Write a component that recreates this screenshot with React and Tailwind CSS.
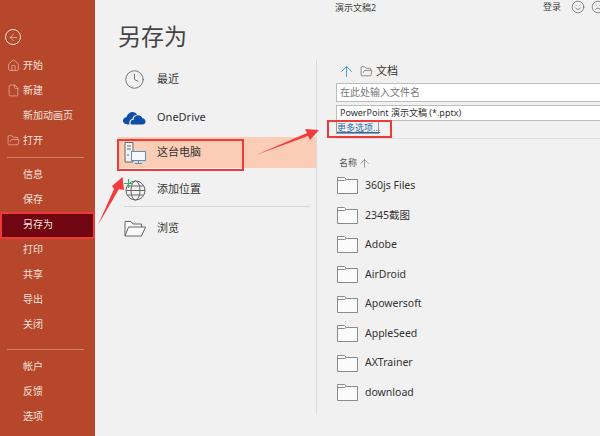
import { ArrowLeft, ArrowUp, Clock, File, FolderOpen, Home, Smile, Frown } from 'lucide-react';

function NavRow({ label, icon, active }) {
  return (
    <div className={`flex h-[25px] items-center pl-[23px] text-[10px] text-[#f6e3dd] ${active ? 'bg-[#6f0611]' : ''}`}>
      {icon && <span className="-ml-[17px] mr-[3px] flex w-[14px] justify-center">{icon}</span>}
      {label}
    </div>
  );
}

function FolderIcon() {
  return (
    <svg width="21" height="17" viewBox="0 0 21 17" fill="none" className="shrink-0">
      <path d="M0.5 16.5V0.5H7.5L9.5 2.5H20.5V16.5Z" fill="#fbfbfb" stroke="#8a8a8a" />
      <path d="M0.5 3.5H7.5L9.5 2.5" stroke="#8a8a8a" />
    </svg>
  );
}

function PlaceRow({ icon, label, selected }) {
  return (
    <div className={`flex h-[31px] items-center text-[11px] text-[#333] ${selected ? 'bg-[#fccdb6]' : ''}`}>
      <span className="flex w-[33px] justify-center">{icon}</span>
      <span className="ml-[6px]">{label}</span>
    </div>
  );
}

const files = ['360js Files', '2345截图', 'Adobe', 'AirDroid', 'Apowersoft', 'AppleSeed', 'AXTrainer', 'download'];

export default function App() {
  return (
    <div className="relative flex h-[436px] w-[600px] overflow-hidden bg-[#f1f1f1] font-['Noto_Sans','Noto_Sans_CJK_SC',sans-serif]">
      {/* Sidebar */}
      <aside className="flex w-[95px] shrink-0 flex-col bg-[#b7472a] pt-[25px]">
        <div className="mb-[4px] flex h-[24px] items-center pl-[5px]">
          <span className="flex h-[16px] w-[16px] items-center justify-center rounded-full border border-[#f6e3dd]">
            <ArrowLeft size={11} color="#f6e3dd" strokeWidth={1.2} />
          </span>
        </div>
        <NavRow label="开始" icon={<Home size={13} color="#eecfc6" strokeWidth={1.1} />} />
        <NavRow label="新建" icon={<File size={13} color="#eecfc6" strokeWidth={1.1} />} />
        <NavRow label="新加动画页" />
        <NavRow label="打开" icon={<FolderOpen size={13} color="#eecfc6" strokeWidth={1.1} />} />
        <div className="mx-[7px] my-[4px] h-px w-[77px] bg-[#d27f66]" />
        <NavRow label="信息" />
        <NavRow label="保存" />
        <NavRow label="另存为" active />
        <NavRow label="打印" />
        <NavRow label="共享" />
        <NavRow label="导出" />
        <NavRow label="关闭" />
        <div className="mx-[7px] mb-[4px] mt-[12px] h-px w-[77px] bg-[#d27f66]" />
        <NavRow label="帐户" />
        <NavRow label="反馈" />
        <NavRow label="选项" />
      </aside>

      {/* Places */}
      <section className="w-[221px] shrink-0 pl-[23px]">
        <h1 className="mt-[18px] text-[23px] leading-[36px] text-[#444]">另存为</h1>
        <div className="mt-[10px] w-[198px]">
          <div className="mb-[7px]">
            <PlaceRow label="最近" icon={<Clock size={21} color="#666" strokeWidth={1} />} />
          </div>
          <PlaceRow
            label="OneDrive"
            icon={
              <svg width="23" height="14" viewBox="0 0 23 14">
                <path d="M5 13.5C1.5 13.5 0 11.5 0 9.8 0 7.8 1.5 6.5 3.5 6.3 4.2 3.5 6.5 1 9.5 1c2 0 3.6 1 4.6 2.5-3 .5-4.5 2.5-4.8 4.6-2 .2-3.5 2-3 5.4z" fill="#0f4ea8" />
                <path d="M8 13.5c-1.3-2.5.2-4.6 2.6-4.7.1-3 2.2-4.6 4.5-4.6 2.2 0 3.6 1.3 4.2 3 1.9.2 3.2 1.5 3.2 3.2 0 1.8-1.3 3.1-3 3.1z" fill="#0f4ea8" />
              </svg>
            }
          />
          <div className="mt-[4px]">
            <PlaceRow
              selected
              label="这台电脑"
              icon={
                <svg width="22" height="22" viewBox="0 0 22 22" fill="none">
                  <path d="M1 .5H9V20H1Z" fill="#f4f1ee" stroke="#666" />
                  <path d="M3 4H7M3 7H7M3 13H5" stroke="#666" />
                  <rect x="7.5" y="9.5" width="14" height="9" fill="#f5f9fc" stroke="#4f93c9" />
                  <path d="M14.5 18.5V21M11 21.5H18" stroke="#4f93c9" />
                </svg>
              }
            />
          </div>
          <div className="mt-[6px]">
            <PlaceRow
              label="添加位置"
              icon={
                <svg width="22" height="22" viewBox="0 0 22 22" fill="none">
                  <circle cx="11.5" cy="11.5" r="9.5" stroke="#666" />
                  <ellipse cx="11.5" cy="11.5" rx="4.5" ry="9.5" stroke="#666" />
                  <path d="M2 11.5H21M3.5 7H19.5M3.5 16H19.5" stroke="#666" />
                  <path d="M4.5 0V9M0 4.5H9" stroke="#2ab56f" strokeWidth="1.2" />
                </svg>
              }
            />
          </div>
          <div className="ml-[6px] mt-[1px] h-px w-[186px] bg-[#d6d6d6]" />
          <div className="mt-[6px]">
            <PlaceRow
              label="浏览"
              icon={
                <svg width="22" height="16" viewBox="0 0 22 16" fill="none">
                  <path d="M1 15V.5H7L9 3H17.5V6M1 15L4.5 6H21.5L17.5 15Z" stroke="#666" fill="#f8f8f8" />
                </svg>
              }
            />
          </div>
        </div>
      </section>

      {/* Vertical divider */}
      <div className="mt-[60px] h-[355px] w-px shrink-0 bg-[#dcdcdc]" />

      {/* File pane */}
      <section className="min-w-0 flex-1 pl-[19px]">
        <div className="flex h-[60px] items-start justify-between text-[9px] text-[#444]">
          <span className="-ml-[1px] mt-px">演示文稿2</span>
          <div className="flex items-center">
            <span className="mr-[10px] text-[9px]">登录</span>
            <Smile size={14} strokeWidth={1} className="mr-[6px]" />
            <Frown size={14} strokeWidth={1} className="-mr-[5px]" />
          </div>
        </div>
        <div className="flex h-[23px] items-center pl-[2px] text-[#333]">
          <ArrowUp size={17} color="#3f93d0" strokeWidth={1.3} />
          <FolderOpen size={13} color="#555" strokeWidth={1.2} className="ml-[5px]" />
          <span className="ml-[3px] text-[11px]">文档</span>
        </div>
        <div className="flex h-[19px] items-center border-y border-l border-[#bdbdbd] bg-white pl-[3px] text-[10px] text-[#777]">
          在此处输入文件名
        </div>
        <div className="mt-[3px] flex h-[16px] items-center border-y border-l border-[#bdbdbd] bg-white pl-[3px] text-[9px] text-[#333]">
          PowerPoint 演示文稿 (*.pptx)
        </div>
        <div className="h-[13px] w-[43px] whitespace-nowrap border border-[#9a9a9a] text-[9px] leading-[11px] text-[#2b6ca8] underline">
          更多选项...
        </div>
        <div className="mt-[4px] h-px w-full bg-[#dedede]" />
        <div className="mt-[17px] flex h-[14px] items-center pl-[3px] text-[9px] text-[#555]">
          名称
          <ArrowUp size={13} color="#555" strokeWidth={1} className="ml-[1px]" />
        </div>
        <div className="mt-px flex flex-col">
          {files.map((name) => (
            <div key={name} className="flex h-[29.6px] items-center pl-[1px] text-[10.5px] text-[#333]">
              <FolderIcon />
              <span className="ml-[7px]">{name}</span>
            </div>
          ))}
        </div>
      </section>

      {/* Red annotations */}
      <div className="absolute left-0 top-[212px] h-[27px] w-[95px] border-2 border-[#f03a3a]" />
      <div className="absolute left-[117px] top-[139px] h-[32px] w-[127px] border-2 border-[#f03a3a]" />
      <div className="absolute left-[327px] top-[120px] h-[18px] w-[65px] border-2 border-[#f03a3a]" />
      <svg className="absolute left-0 top-0" width="600" height="436" viewBox="0 0 600 436" fill="none">
        <path d="M98 225L114 189 112 186 122.5 177 124 190 119 189Z" fill="#f23c3c" />
        <path d="M256 155L307 133 305 129 319 130 310 140 308 136Z" fill="#f23c3c" />
      </svg>
    </div>
  );
}
